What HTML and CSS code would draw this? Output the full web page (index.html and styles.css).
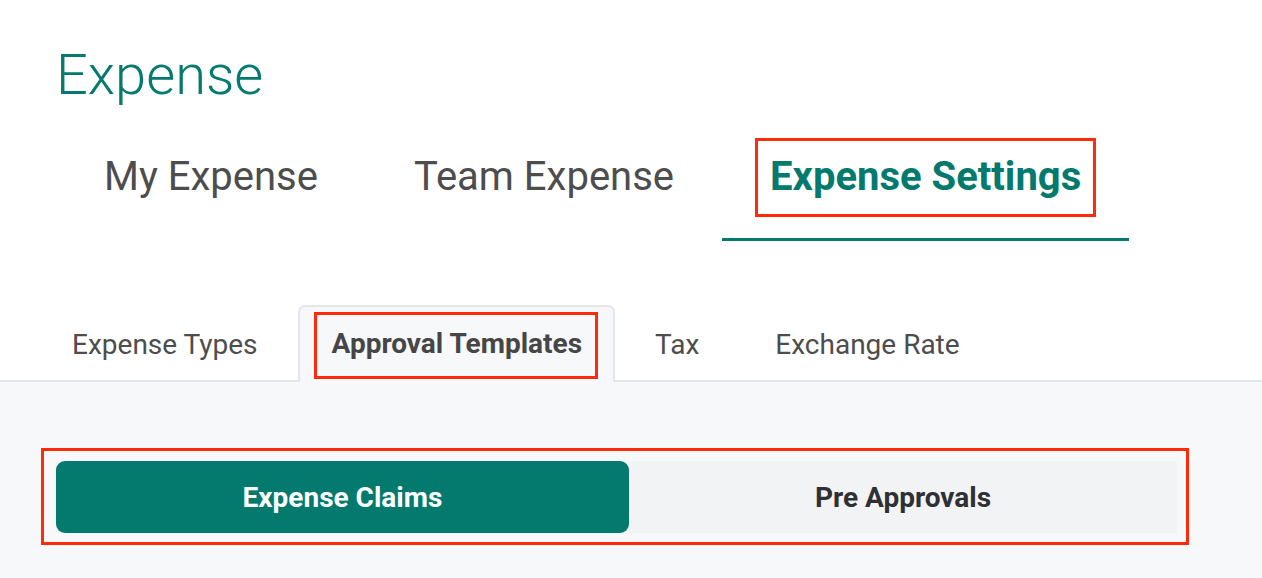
FILE: index.html
```html
<!DOCTYPE html>
<html lang="en">
<head>
<meta charset="utf-8">
<title>Expense Settings</title>
<link rel="stylesheet" href="styles.css">
</head>
<body>
  <header class="page-header">
    <h1 class="page-title">Expense</h1>
    <nav class="main-tabs">
      <a class="main-tab"><span class="main-label">My Expense</span></a>
      <a class="main-tab"><span class="main-label">Team Expense</span></a>
      <a class="main-tab is-active"><span class="main-label annot">Expense Settings</span></a>
    </nav>
  </header>

  <nav class="sub-tabs">
    <a class="sub-tab"><span class="sub-label">Expense Types</span></a>
    <a class="sub-tab is-active"><span class="sub-label annot">Approval Templates</span></a>
    <a class="sub-tab"><span class="sub-label">Tax</span></a>
    <a class="sub-tab"><span class="sub-label">Exchange Rate</span></a>
  </nav>

  <main class="content">
    <div class="segment-wrap annot">
      <div class="segment">
        <button class="segment-btn is-active">Expense Claims</button>
        <button class="segment-btn">Pre Approvals</button>
      </div>
    </div>
  </main>
</body>
</html>
```

FILE: styles.css
```css
* { box-sizing: border-box; }

html, body {
  margin: 0;
  padding: 0;
}

body {
  font-family: Roboto, "Liberation Sans", Arial, sans-serif;
  background: #f7f8fa;
  min-height: 578px;
  color: #4d4d4d;
}

.page-header {
  background: #ffffff;
  padding-top: 47px;
}

.page-title {
  margin: 0 0 0 56px;
  font-size: 56px;
  line-height: 56px;
  font-weight: 300;
  color: #037a6d;
}

.main-tabs {
  display: flex;
  margin-top: 35px;
  padding-left: 56px;
}

.main-tab {
  display: block;
  padding: 0 33px 21px;
  border-bottom: 3px solid transparent;
}

.main-tab.is-active {
  border-bottom-color: #037a6d;
}

.main-label {
  display: block;
  padding: 16px 12px 17px;
  border: 3px solid transparent;
  font-size: 40px;
  line-height: 40px;
  color: #4d4d4d;
  white-space: nowrap;
}

.main-tab.is-active .main-label {
  color: #037a6d;
  font-weight: 700;
}

.annot.annot {
  border: 3px solid #ff2a0a;
}

.sub-tabs {
  display: flex;
  align-items: flex-end;
  gap: 4px;
  background: #ffffff;
  padding: 64px 0 0 36px;
  border-bottom: 2px solid #e4e6e9;
}

.sub-tab {
  display: block;
  margin-bottom: -2px;
  padding: 5px 31px 3px;
  border: 2px solid transparent;
  border-bottom: 0;
  border-radius: 7px 7px 0 0;
}

.sub-tab.is-active {
  padding: 5px 15px 3px 14px;
  background: #f7f8fa;
  border-color: #e4e6e9;
}

.sub-label {
  display: block;
  padding: 16px 0 17px;
  border: 3px solid transparent;
  font-size: 28px;
  line-height: 28px;
  color: #4d4d4d;
  white-space: nowrap;
}

.sub-tab.is-active .sub-label {
  padding: 15px 13px 18px 15px;
  font-weight: 700;
  color: #464646;
}

.content {
  padding: 66px 0 0 41px;
}

.segment-wrap {
  width: 1148px;
  padding: 10px 9px 9px 12px;
}

.segment {
  display: grid;
  grid-template-columns: 573fr 548fr;
  height: 72px;
  background: #f2f3f5;
}

.segment-btn {
  display: flex;
  align-items: center;
  justify-content: center;
  border: 0;
  margin: 0;
  padding: 0;
  background: transparent;
  font-family: Roboto, "Liberation Sans", Arial, sans-serif;
  font-size: 28px;
  font-weight: 700;
  color: #2f3033;
  border-radius: 9px;
}

.segment-btn.is-active {
  background: #037a6d;
  color: #ffffff;
}
```
